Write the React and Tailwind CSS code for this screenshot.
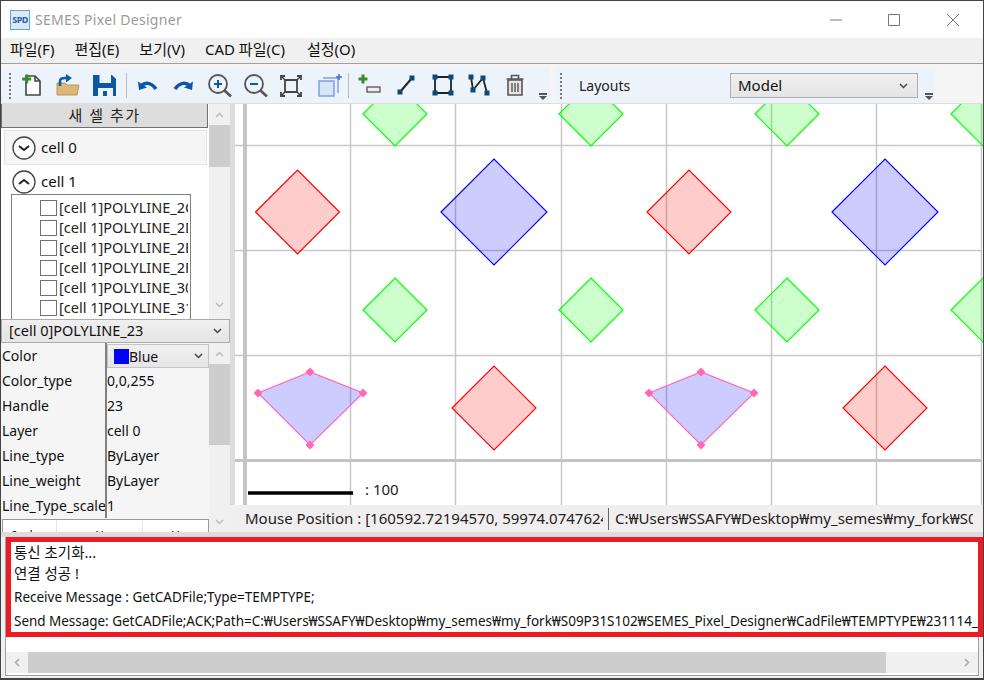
import React from "react";

const FONT = "font-['Noto_Sans','Noto_Sans_CJK_KR',sans-serif]";

function ToolIcon({ children, className = "" }) {
  return (
    <div className={"w-[28px] h-[28px] flex items-center justify-center shrink-0 " + className}>
      <svg width="28" height="28" viewBox="0 0 28 28">{children}</svg>
    </div>
  );
}

function Grip() {
  return <div className="w-[2px] h-[26px] border-l-2 border-dotted border-[#777]" />;
}

function Overflow() {
  return (
    <div className="self-end mb-[3px] flex flex-col items-center gap-[1px] w-[8px]">
      <div className="w-[8px] h-[2px] bg-[#555]" />
      <div className="w-0 h-0 border-x-4 border-x-transparent border-t-4 border-t-[#555]" />
    </div>
  );
}

function Handle({ x, y }) {
  return <rect x={x - 2.5} y={y - 2.5} width="5" height="5" fill="#0b4a7c" />;
}

function Toolbar() {
  return (
    <div className="flex h-[40px] pt-[4px] bg-[#f5f5f5] border-b border-[#dddddd] shrink-0">
      <div className="flex items-center h-[35px] w-[549px] pl-[8px] bg-[#edf3fb]">
        <Grip />
        <ToolIcon className="ml-[7px]">
          <path d="M8 4h9l5 5v14H8z" fill="#fff" stroke="#444" strokeWidth="1.6" />
          <path d="M17 4v5h5" fill="none" stroke="#444" strokeWidth="1.6" />
          <path d="M8.7 2.5v9M4.2 7h9" stroke="#3c8a2e" strokeWidth="3" />
        </ToolIcon>
        <ToolIcon className="ml-[7px]">
          <path d="M4 23V11h8l2 2h12l-2 10z" fill="#dcb67a" stroke="#c09553" />
          <path d="M7 14V9c0-2 2-3 5-3h2" fill="none" stroke="#0b5ea8" strokeWidth="2.6" />
          <path d="M13 2l6 4-6 4.5z" fill="#0b5ea8" />
        </ToolIcon>
        <ToolIcon className="ml-[10px]">
          <path d="M2 3h19l4 4v17H2z" fill="#0b57a4" />
          <path d="M8.5 3H20v8H8.5z" fill="#edf3fb" />
          <path d="M7 16h15v8H7z" fill="#edf3fb" />
          <path d="M12 19h4v5h-4z" fill="#0b57a4" />
        </ToolIcon>
        <div className="w-[1px] h-[25px] bg-[#bbb] ml-[7px]" />
        <ToolIcon className="ml-[7px]">
          <path d="M7 14c4-4 10-4 15 3" fill="none" stroke="#0b57a4" strokeWidth="3.5" />
          <path d="M4 9.5l1 8.5 8-2.5z" fill="#0b57a4" />
        </ToolIcon>
        <ToolIcon className="ml-[7px]">
          <path d="M21 14c-4-4-10-4-15 3" fill="none" stroke="#0b57a4" strokeWidth="3.5" />
          <path d="M24 9.5l-1 8.5-8-2.5z" fill="#0b57a4" />
        </ToolIcon>
        <ToolIcon className="ml-[8px]">
          <circle cx="13" cy="12" r="9" fill="none" stroke="#555" strokeWidth="1.8" />
          <path d="M19.5 18.5l6.5 6" stroke="#555" strokeWidth="2.5" />
          <path d="M13 8v8M9 12h8" stroke="#0b57a4" strokeWidth="2" />
        </ToolIcon>
        <ToolIcon className="ml-[8px]">
          <circle cx="13" cy="12" r="9" fill="none" stroke="#555" strokeWidth="1.8" />
          <path d="M19.5 18.5l6.5 6" stroke="#555" strokeWidth="2.5" />
          <path d="M9 12h8" stroke="#0b57a4" strokeWidth="2" />
        </ToolIcon>
        <ToolIcon className="ml-[8px]">
          <path d="M8 8h12v12H8z" fill="none" stroke="#444" strokeWidth="1.8" />
          <path d="M4 8V4h4M20 4h4v4M24 20v4h-4M8 24H4v-4" fill="none" stroke="#444" strokeWidth="1.8" />
          <path d="M4 4l4 4M24 4l-4 4M24 24l-4-4M4 24l4-4" stroke="#444" strokeWidth="1.5" />
        </ToolIcon>
        <ToolIcon className="ml-[10px]">
          <path d="M4 9h15v15H4z" fill="#d8e6fa" stroke="#7d9fe8" strokeWidth="1.5" />
          <path d="M8 6h15v15" fill="none" stroke="#7d9fe8" strokeWidth="1.5" />
          <path d="M24 2v6M21 5h6" stroke="#3c6fd8" strokeWidth="1.5" />
        </ToolIcon>
        <div className="w-[1px] h-[25px] bg-[#bbb] ml-[5px]" />
        <ToolIcon className="ml-[7px]">
          <path d="M7 2.5v9M2.5 7h9" stroke="#3c8a2e" strokeWidth="3" />
          <rect x="11" y="15" width="13" height="5" fill="#eee" stroke="#555" strokeWidth="1.3" />
        </ToolIcon>
        <ToolIcon className="ml-[8px]">
          <path d="M8 20L20 6" stroke="#222" strokeWidth="2" />
          <Handle x={8} y={20} />
          <Handle x={20} y={6} />
        </ToolIcon>
        <ToolIcon className="ml-[9px]">
          <path d="M6 5h16v16H6z" fill="none" stroke="#222" strokeWidth="1.8" />
          <Handle x={6} y={5} />
          <Handle x={22} y={5} />
          <Handle x={6} y={21} />
          <Handle x={22} y={21} />
        </ToolIcon>
        <ToolIcon className="ml-[8px]">
          <path d="M6 5l2 13 10-12 4 15" fill="none" stroke="#222" strokeWidth="1.8" />
          <Handle x={6} y={5} />
          <Handle x={8} y={18} />
          <Handle x={18} y={6} />
          <Handle x={22} y={21} />
        </ToolIcon>
        <ToolIcon className="ml-[8px]">
          <path d="M7 8h14v15H7z" fill="#e4e4e4" stroke="#555" strokeWidth="1.6" />
          <path d="M5.5 7h17M10.5 7V3.5h7V7" fill="none" stroke="#555" strokeWidth="1.6" />
          <path d="M11 11v9M14 11v9M17 11v9" stroke="#555" strokeWidth="1.4" />
        </ToolIcon>
        <div className="h-full flex ml-[10px]">
          <Overflow />
        </div>
      </div>
      <div className="flex items-center h-[35px] w-[379px] bg-[#edf3fb] ml-[6px] pl-[4px]">
        <Grip />
        <span className="ml-[17px] w-[52px] text-[14px] text-[#222] whitespace-nowrap">Layouts</span>
        <div className="ml-[99px] w-[188px] h-[25px] border border-[#acacac] bg-gradient-to-b from-[#f0f0f0] to-[#e5e5e5] flex items-center justify-between pl-[7px] pr-[7px]">
          <span className="text-[15px] text-[#111]">Model</span>
          <Chevron />
        </div>
        <div className="h-full flex ml-[7px]">
          <Overflow />
        </div>
      </div>
    </div>
  );
}

function Chevron() {
  return (
    <svg width="9" height="6" viewBox="0 0 9 6" className="mr-[2px]">
      <path d="M1 1l3.5 3.5L8 1" fill="none" stroke="#444" strokeWidth="1.5" />
    </svg>
  );
}

function ScrollBar({ thumb, bottomGap = "" }) {
  return (
    <div className="w-[21px] bg-[#f0f0f0] flex flex-col shrink-0">
      <div className="h-[21px] flex items-center justify-center">
        <svg width="9" height="6" viewBox="0 0 9 6"><path d="M1 5l3.5-3.5L8 5" fill="none" stroke="#bbb" strokeWidth="1.5" /></svg>
      </div>
      <div className={"bg-[#cdcdcd] " + thumb} />
      <div className="flex-1" />
      <div className={"h-[21px] flex items-center justify-center " + bottomGap}>
        <svg width="9" height="6" viewBox="0 0 9 6"><path d="M1 1l3.5 3.5L8 1" fill="none" stroke="#bbb" strokeWidth="1.5" /></svg>
      </div>
    </div>
  );
}

function CellHead({ name, open, className = "" }) {
  return (
    <div className={"flex items-center gap-[5px] " + className}>
      <svg width="24" height="24" viewBox="0 0 24 24">
        <circle cx="12" cy="12" r="11" fill="#fff" stroke="#444" strokeWidth="1.3" />
        <path d={open ? "M7 14l5-4 5 4" : "M7 10l5 4 5-4"} fill="none" stroke="#222" strokeWidth="2" />
      </svg>
      <span className="text-[15px] text-[#111]">{name}</span>
    </div>
  );
}

function Tree() {
  const rows = ["2C", "2D", "2E", "2F", "30", "31"];
  return (
    <div className="h-[215px] flex bg-white shrink-0">
      <div className="w-[208px] flex flex-col overflow-hidden shrink-0">
        <div className="h-[24px] mr-[1px] bg-[#dddddd] border border-[#707070] border-t-0 flex items-center justify-center tracking-[1.5px] text-[15px] text-[#222] shrink-0">
          새 셀 추가
        </div>
        <CellHead name="cell 0" className="h-[35px] mt-[2px] ml-[3px] mr-[2px] pl-[7px] bg-[#f5f5f5] border border-[#e4e4e4] shrink-0" />
        <CellHead name="cell 1" open className="h-[33px] -mb-[4px] pl-[11px] shrink-0" />
        <div className="w-[180px] ml-[10px] border border-[#808080] border-b-0 pt-[3px] overflow-hidden flex-1">
          {rows.map((r) => (
            <div key={r} className="h-[20px] flex items-center pl-[28px] overflow-hidden whitespace-nowrap">
              <div className="w-[17px] h-[16px] border border-[#707070] bg-white shrink-0" />
              <span className="ml-[2px] text-[14.5px] text-[#222] w-[129px] overflow-hidden shrink-0">[cell 1]POLYLINE_{r}</span>
            </div>
          ))}
        </div>
      </div>
      <ScrollBar thumb="h-[42px]" bottomGap="mb-[4px]" />
    </div>
  );
}

function PropRow({ label, value }) {
  return (
    <div className="h-[25px] flex items-center">
      <div className="w-[104px] pl-[1px] overflow-hidden whitespace-nowrap text-[14px] text-[#111] shrink-0">{label}</div>
      <div className="w-[2px] h-full bg-[#808080] shrink-0" />
      <div className="flex-1 text-[14px] text-[#111] leading-none">{value}</div>
    </div>
  );
}

function Props() {
  return (
    <div className="h-[189px] flex bg-[#f5f5f5] overflow-hidden shrink-0">
      <div className="w-[208px] shrink-0 overflow-hidden">
        <div className="h-[25px] flex">
          <div className="w-[104px] pl-[1px] text-[14px] text-[#111] flex items-center shrink-0">Color</div>
          <div className="w-[2px] bg-[#808080] shrink-0" />
          <div className="flex-1 h-[24px] mt-[1px] border border-[#c4c4c4] bg-gradient-to-b from-[#f0f0f0] to-[#e5e5e5] flex items-center justify-between pl-[6px] pr-[3px]">
            <div className="flex items-end">
              <div className="w-[15px] h-[15px] bg-[#0000ff]" />
              <span className="text-[14px] leading-[14px] text-[#111]">Blue</span>
            </div>
            <Chevron />
          </div>
        </div>
        <PropRow label="Color_type" value="0,0,255" />
        <PropRow label="Handle" value="23" />
        <PropRow label="Layer" value="cell 0" />
        <PropRow label="Line_type" value="ByLayer" />
        <PropRow label="Line_weight" value="ByLayer" />
        <PropRow label="Line_Type_scale" value="1" />
        <div className="h-[26px] mt-[1px] ml-[1px] border border-[#999] bg-white flex text-[13px] text-[#222]">
          <div className="w-[53px] text-center pt-[6px]">Index</div>
          <div className="w-[87px] border-x border-[#e4e4e4] text-center pt-[6px]">X</div>
          <div className="flex-1 text-center pt-[6px]">Y</div>
        </div>
      </div>
      <ScrollBar thumb="h-[81px]" />
    </div>
  );
}

function Diamond({ cx, cy, r, color }) {
  return (
    <polygon
      points={`${cx - r},${cy} ${cx},${cy - r} ${cx + r},${cy} ${cx},${cy + r}`}
      fill={color}
      fillOpacity="0.2"
      stroke={color}
      strokeWidth="1.15"
    />
  );
}

function Selected({ dx }) {
  const pts = [[258, 393], [310, 372], [363, 393], [310, 445]];
  return (
    <g transform={`translate(${dx} 0)`}>
      <polygon points={pts.map((p) => p.join(",")).join(" ")} fill="#0000ff" fillOpacity="0.2" stroke="#ff69b4" strokeWidth="1.2" />
      {pts.map((p) => (
        <polygon key={p[0] + "" + p[1]} points={`${p[0] - 4.5},${p[1]} ${p[0]},${p[1] - 4.5} ${p[0] + 4.5},${p[1]} ${p[0]},${p[1] + 4.5}`} fill="#ff69b4" />
      ))}
    </g>
  );
}

function Canvas() {
  const vx = [350, 455, 561, 666, 771, 876, 981];
  const hy = [145, 250, 355];
  return (
    <div className="h-[401px] bg-white relative overflow-hidden border-l-[5px] border-[#dcdcdc] shrink-0">
      {/* drawing coords are screen coords, shifted by the canvas origin */}
      <svg width="749" height="401" viewBox="235 104 749 401" className="block">
        {vx.map((x) => (
          <line key={x} x1={x + 0.5} y1="104" x2={x + 0.5} y2="505" stroke="#c8c8c8" strokeWidth="1.5" />
        ))}
        {hy.map((y) => (
          <line key={y} x1="235" y1={y + 0.5} x2="981" y2={y + 0.5} stroke="#c8c8c8" strokeWidth="1.5" />
        ))}
        <line x1="245" y1="104" x2="245" y2="505" stroke="#c4c4c4" strokeWidth="4" />
        <line x1="235" y1="460.5" x2="981" y2="460.5" stroke="#c4c4c4" strokeWidth="3" />
        {[395, 591, 787, 983].map((x) => (
          <Diamond key={"a" + x} cx={x} cy={114} r={32} color="#00ff00" />
        ))}
        {[395, 591, 787, 983].map((x) => (
          <Diamond key={"b" + x} cx={x} cy={310} r={32} color="#00ff00" />
        ))}
        {[297.5, 689].map((x) => (
          <Diamond key={"c" + x} cx={x} cy={212} r={42} color="#ff0000" />
        ))}
        {[494, 885].map((x) => (
          <Diamond key={"d" + x} cx={x} cy={408} r={42} color="#ff0000" />
        ))}
        {[494, 885].map((x) => (
          <Diamond key={"e" + x} cx={x} cy={212} r={53} color="#0000ff" />
        ))}
        <Selected dx={0} />
        <Selected dx={391} />
        <line x1="248" y1="493" x2="353" y2="493" stroke="#000" strokeWidth="3.5" />
      </svg>
      <span className="absolute left-[130px] top-[374px] text-[15px] text-[#222]">: 100</span>
    </div>
  );
}

export default function App() {
  return (
    <div className={"w-[984px] h-[680px] flex flex-col overflow-hidden bg-[#f0f0f0] border-t border-x border-b-2 border-[#444] " + FONT}>
      <div className="h-[37px] bg-white flex items-center shrink-0">
        <div className="ml-[9px] w-[20px] h-[20px] bg-[#dbe9f7] border border-[#6a9fd0] flex items-center justify-center text-[9px] font-bold text-[#1f5fb0] leading-none tracking-[-0.5px]">SPD</div>
        <span className="ml-[5px] text-[14px] tracking-[0.3px] text-[#9a9a9a]">SEMES Pixel Designer</span>
        <div className="flex-1" />
        <svg width="12" height="2" viewBox="0 0 12 2" className="mr-[46px]"><path d="M0 1h12" stroke="#777" /></svg>
        <svg width="12" height="12" viewBox="0 0 12 12" className="mr-[47px]"><path d="M.5.5h11v11H.5z" fill="none" stroke="#777" /></svg>
        <svg width="12" height="12" viewBox="0 0 12 12" className="mr-[24px]"><path d="M0 0l12 12M12 0L0 12" stroke="#777" /></svg>
      </div>
      <div className="h-[22px] flex items-center shrink-0 gap-[20px] pl-[9px] text-[15px] text-[#111] bg-[#f0f0f0] whitespace-nowrap">
        <span>파일(F)</span>
        <span>편집(E)</span>
        <span>보기(V)</span>
        <span>CAD 파일(C)</span>
        <span className="ml-[2px]">설정(O)</span>
      </div>
      <div className="h-[4px] shrink-0 border-b border-[#a0a0a0] bg-[#f0f0f0]" />
      <Toolbar />
      <div className="flex h-[428px] shrink-0">
        <div className="w-[229px] shrink-0 flex flex-col">
          <Tree />
          <div className="h-[24px] border border-[#acacac] bg-gradient-to-b from-[#f0f0f0] to-[#e5e5e5] flex items-center justify-between pl-[7px] pr-[5px] shrink-0">
            <span className="text-[14.5px] text-[#111]">[cell 0]POLYLINE_23</span>
            <Chevron />
          </div>
          <Props />
        </div>
        <div className="flex-1 flex flex-col">
          <Canvas />
          <div className="h-[27px] ml-[4px] flex items-center bg-[#f0eeee] text-[15px] text-[#222] whitespace-nowrap shrink-0">
            <span className="ml-[11px] w-[358px] overflow-hidden shrink-0">Mouse Position : [160592.72194570, 59974.07476244]</span>
            <div className="w-[1px] h-[22px] bg-[#666] ml-[5px] shrink-0" />
            <span className="ml-[6px] w-[358px] overflow-hidden shrink-0">C:₩Users₩SSAFY₩Desktop₩my_semes₩my_fork₩S09P31S102</span>
          </div>
        </div>
      </div>
      <div className="h-[5px] bg-[#dcdcdc] shrink-0" />
      <div className="ml-[4px] w-[974px] h-[139px] flex flex-col border-x border-b border-[#a0a0a0] bg-white shrink-0">
        <div className="w-[977px] h-[100px] border-[5px] border-[#ed1c24] pl-[3px] text-[13.5px] text-[#111] whitespace-nowrap overflow-hidden bg-white shrink-0">
          <div className="h-[21px] flex items-center text-[14.5px]">통신 초기화...</div>
          <div className="h-[22px] flex items-center text-[14.5px]">연결 성공 !</div>
          <div className="h-[25px] flex items-center">Receive Message : GetCADFile;Type=TEMPTYPE;</div>
          <div className="h-[22px] flex items-center tracking-[-0.03px]">Send Message: GetCADFile;ACK;Path=C:₩Users₩SSAFY₩Desktop₩my_semes₩my_fork₩S09P31S102₩SEMES_Pixel_Designer₩CadFile₩TEMPTYPE₩231114_</div>
        </div>
        <div className="h-[15px] shrink-0" />
        <div className="h-[21px] bg-[#f0f0f0] flex items-center shrink-0">
          <div className="w-[22px] flex justify-center">
            <svg width="6" height="9" viewBox="0 0 6 9"><path d="M5 1L1.5 4.5 5 8" fill="none" stroke="#aaa" strokeWidth="1.5" /></svg>
          </div>
          <div className="w-[858px] h-full bg-[#cdcdcd]" />
          <div className="flex-1" />
          <div className="w-[22px] flex justify-center">
            <svg width="6" height="9" viewBox="0 0 6 9"><path d="M1 1l3.5 3.5L1 8" fill="none" stroke="#aaa" strokeWidth="1.5" /></svg>
          </div>
        </div>
      </div>
    </div>
  );
}
